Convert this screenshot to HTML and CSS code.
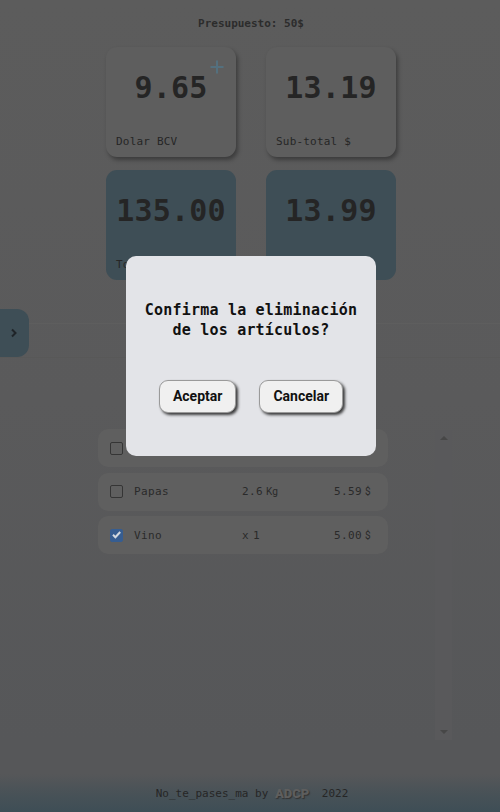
FILE: index.html
```html
<!DOCTYPE html>
<html lang="es">
<head>
<meta charset="utf-8">
<title>No_te_pases_ma</title>
<link rel="stylesheet" href="styles.css">
</head>
<body>
<div class="page">
  <header class="budget">Presupuesto: 50$</header>

  <main class="cards">
    <div class="card card-grey">
      <span class="plus">
        <svg width="14" height="14" viewBox="0 0 14 14"><path d="M7 0.5v13M0.5 7h13" stroke="#54707e" stroke-width="2" fill="none"/></svg>
      </span>
      <div class="num">9.65</div>
      <div class="label">Dolar BCV</div>
    </div>
    <div class="card card-grey">
      <div class="num">13.19</div>
      <div class="label">Sub-total $</div>
    </div>
    <div class="card card-blue">
      <div class="num">135.00</div>
      <div class="label">Total Bs</div>
    </div>
    <div class="card card-blue">
      <div class="num">13.99</div>
      <div class="label">Total $</div>
    </div>
  </main>

  <section class="form-band"></section>

  <div class="list-wrap">
    <div class="list">
      <div class="row">
        <span class="box"></span>
        <span class="name">Arroz</span>
        <span class="qty">x<span class="qn">2</span></span>
        <span class="price">3.40<small>$</small></span>
      </div>
      <div class="row">
        <span class="box"></span>
        <span class="name">Papas</span>
        <span class="qty">2.6<small>Kg</small></span>
        <span class="price">5.59<small>$</small></span>
      </div>
      <div class="row">
        <span class="box checked">
          <svg width="13" height="13" viewBox="0 0 13 13"><path d="M3 6.8l2.4 2.4L10.2 4" stroke="#d3d9e0" stroke-width="2" fill="none"/></svg>
        </span>
        <span class="name">Vino</span>
        <span class="qty">x<span class="qn">1</span></span>
        <span class="price">5.00<small>$</small></span>
      </div>
    </div>
    <div class="rail">
      <button class="rail-btn up" aria-label="subir"></button>
      <button class="rail-btn down" aria-label="bajar"></button>
    </div>
  </div>

  <footer class="footer">No_te_pases_ma by <b class="brand">ADCP</b> 2022</footer>
</div>

<button class="side-tab" aria-label="abrir">
  <svg width="8" height="10" viewBox="0 0 8 10"><path d="M2 1.5l3.5 3.5L2 8.5" stroke="#1f2428" stroke-width="2" fill="none"/></svg>
</button>

<div class="modal">
  <p class="modal-text">Confirma la eliminación<br>de los artículos?</p>
  <div class="modal-actions">
    <button class="btn">Aceptar</button>
    <button class="btn">Cancelar</button>
  </div>
</div>
</body>
</html>
```
FILE: styles.css
```css
* { box-sizing: border-box; }
html, body { margin: 0; padding: 0; }
body {
  width: 500px;
  height: 812px;
  overflow: hidden;
  background: linear-gradient(#5c5c5c 0px, #5a5a5b 400px, #565759 740px);
  font-family: "DejaVu Sans Mono", monospace;
  color: #2a2a2a;
}
.page {
  height: 812px;
  display: flex;
  flex-direction: column;
}
.budget {
  padding: 17px 0 16px 2px;
  line-height: 14px;
  height: 47px;
  font-size: 11px;
  font-weight: bold;
  text-align: center;
  color: #2c2c2c;
}
.cards {
  display: grid;
  grid-template-columns: 130px 130px;
  grid-auto-rows: 110px;
  gap: 13px 30px;
  justify-content: center;
  padding-left: 2px;
}
.card {
  position: relative;
  border-radius: 11px;
  display: flex;
  flex-direction: column;
  padding: 23px 10px 8px 10px;
}
.card-grey {
  background: #5e5e5e;
  box-shadow: 2px 3px 4px rgba(0,0,0,0.35);
}
.card-blue {
  background: #3e4e56;
}
.num {
  font-size: 30px;
  line-height: 36px;
  text-align: center;
  font-weight: bold;
  color: #252525;
  letter-spacing: 0.2px;
}
.label {
  margin-top: auto;
  font-size: 11px;
  line-height: 14px;
  color: #262626;
  letter-spacing: 0.2px;
}
.plus {
  position: absolute;
  top: 13px;
  right: 12px;
  width: 14px;
  height: 14px;
  display: block;
}
.plus svg { display: block; }
.form-band {
  margin-top: 43px;
  height: 35px;
  border-top: 1px solid #5e5e5e;
  border-bottom: 1px solid #585858;
}
.list-wrap {
  margin-top: 71px;
  margin-left: 98px;
  width: 354px;
  height: 311px;
  display: flex;
}
.list {
  flex: 1;
  display: flex;
  flex-direction: column;
  gap: 5.5px;
}
.rail {
  width: 17px;
  margin-top: 1px;
  background: #59595b;
  display: flex;
  flex-direction: column;
  justify-content: space-between;
  align-items: center;
  padding: 6px 0;
}
.rail-btn {
  width: 0;
  height: 0;
  padding: 0;
  border-left: 4px solid transparent;
  border-right: 4px solid transparent;
  background: none;
}
.rail-btn.up { border-bottom: 4px solid #474747; border-top: 0; }
.rail-btn.down { border-top: 4px solid #474747; border-bottom: 0; }
.row {
  flex: 0 0 38px;
  width: 290px;
  border-radius: 10px;
  background: #5f5f5f;
  display: grid;
  grid-template-columns: 13px 97px 81px 1fr;
  column-gap: 11px;
  align-items: center;
  padding-left: 12px;
  font-size: 11px;
  color: #2a2a2a;
  letter-spacing: 0.4px;
}
.row small {
  font-family: "Roboto", sans-serif;
  font-size: 10px;
  margin-left: 3px;
  letter-spacing: 0;
}
.qn { margin-left: 4px; }
.box {
  width: 13px;
  height: 13px;
  border: 1.5px solid #353535;
  border-radius: 2px;
  display: block;
  position: relative;
}
.box.checked {
  background: #365d91;
  border-color: #365d91;
}
.box.checked svg {
  position: absolute;
  left: -1.5px;
  top: -1.5px;
}
.footer {
  margin-top: auto;
  height: 38px;
  display: flex;
  align-items: center;
  justify-content: center;
  padding-left: 4px;
  font-size: 11px;
  color: #262626;
  white-space: pre;
  background: linear-gradient(rgba(62,78,86,0) 0%, rgba(62,78,86,0.5) 45%, #3e4e56 100%);
}
.brand {
  font-family: "Roboto", sans-serif;
  font-weight: 900;
  font-size: 13px;
  color: #5e5e5e;
  text-shadow: 1px 1px 1px #333;
  margin: 0 6px 0 0;
}
.side-tab {
  position: fixed;
  left: 0;
  top: 309px;
  width: 29px;
  height: 48px;
  border: none;
  padding: 0 2px 0 0;
  background: #3e4e56;
  border-radius: 0 12px 12px 0;
  display: flex;
  align-items: center;
  justify-content: center;
}
.side-tab svg { display: block; }
.modal {
  position: fixed;
  top: 256px;
  left: 126px;
  width: 250px;
  height: 200px;
  background: #e3e4e8;
  border-radius: 10px;
  padding-top: 44px;
  text-align: center;
}
.modal-text {
  margin: 0;
  font-family: "DejaVu Sans Mono", monospace;
  font-weight: bold;
  font-size: 15px;
  line-height: 20px;
  letter-spacing: 0.2px;
  color: #111;
}
.modal-actions {
  margin-top: 40px;
  display: flex;
  justify-content: center;
  gap: 23px;
}
.btn {
  font-family: "Roboto", sans-serif;
  font-weight: bold;
  font-size: 14px;
  line-height: 17px;
  height: 33px;
  padding: 0 13px;
  color: #111;
  background: #f0f0f0;
  border: 1px solid #9a9a9a;
  border-radius: 9px;
  box-shadow: 2px 2px 3px rgba(0,0,0,0.75);
}
```
